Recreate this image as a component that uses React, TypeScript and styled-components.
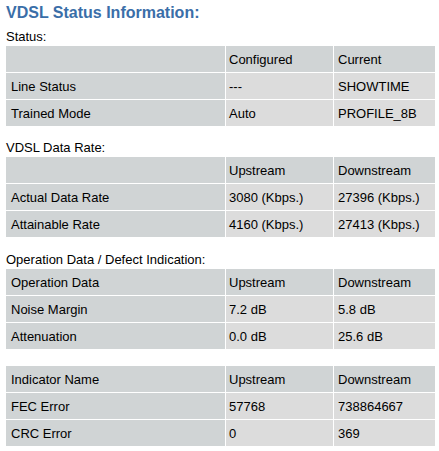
import React from "react";
import styled, { createGlobalStyle } from "styled-components";

const GlobalStyle = createGlobalStyle`
  body {
    margin: 0;
    background: #ffffff;
    font-family: "Liberation Sans", Arial, sans-serif;
  }
`;

const Page = styled.div`
  padding: 4px 0 0 6px;
  width: 429px;
  color: #000000;
  font-size: 13px;
`;

const Title = styled.h1`
  margin: 0 0 7px;
  font-size: 16px;
  line-height: 18px;
  font-weight: bold;
  color: #3a6ea8;
`;

const Section = styled.div<{ gap?: number }>`
  margin-top: ${(p) => p.gap ?? 0}px;
`;

const Label = styled.div`
  line-height: 16px;
  height: 16px;
  margin-bottom: 1px;
`;

const Grid = styled.div`
  display: grid;
  grid-template-columns: 219px 107px 101px;
  grid-auto-rows: 26px;
  gap: 1px;
`;

const Cell = styled.div<{ col: number; head?: boolean }>`
  display: flex;
  align-items: center;
  padding-left: ${(p) => (p.col === 0 ? 5 : p.col === 1 ? 3 : 4)}px;
  background: ${(p) => (p.head || p.col === 0 ? "#d0d4d5" : "#dcdcdc")};
  white-space: nowrap;
`;

type Row = [string, string, string];

const DataTable: React.FC<{ rows: Row[] }> = ({ rows }) => (
  <Grid>
    {rows.map((row, r) =>
      row.map((text, c) => (
        <Cell key={`${r}-${c}`} col={c} head={r === 0}>
          {text}
        </Cell>
      ))
    )}
  </Grid>
);

const App: React.FC = () => (
  <>
    <GlobalStyle />
    <Page>
      <Title>VDSL Status Information:</Title>
      <Section>
        <Label>Status:</Label>
        <DataTable
          rows={[
            ["", "Configured", "Current"],
            ["Line Status", "---", "SHOWTIME"],
            ["Trained Mode", "Auto", "PROFILE_8B"],
          ]}
        />
      </Section>
      <Section gap={14}>
        <Label>VDSL Data Rate:</Label>
        <DataTable
          rows={[
            ["", "Upstream", "Downstream"],
            ["Actual Data Rate", "3080 (Kbps.)", "27396 (Kbps.)"],
            ["Attainable Rate", "4160 (Kbps.)", "27413 (Kbps.)"],
          ]}
        />
      </Section>
      <Section gap={15}>
        <Label>Operation Data / Defect Indication:</Label>
        <DataTable
          rows={[
            ["Operation Data", "Upstream", "Downstream"],
            ["Noise Margin", "7.2 dB", "5.8 dB"],
            ["Attenuation", "0.0 dB", "25.6 dB"],
          ]}
        />
      </Section>
      <Section gap={17}>
        <DataTable
          rows={[
            ["Indicator Name", "Upstream", "Downstream"],
            ["FEC Error", "57768", "738864667"],
            ["CRC Error", "0", "369"],
          ]}
        />
      </Section>
    </Page>
  </>
);

export default App;
